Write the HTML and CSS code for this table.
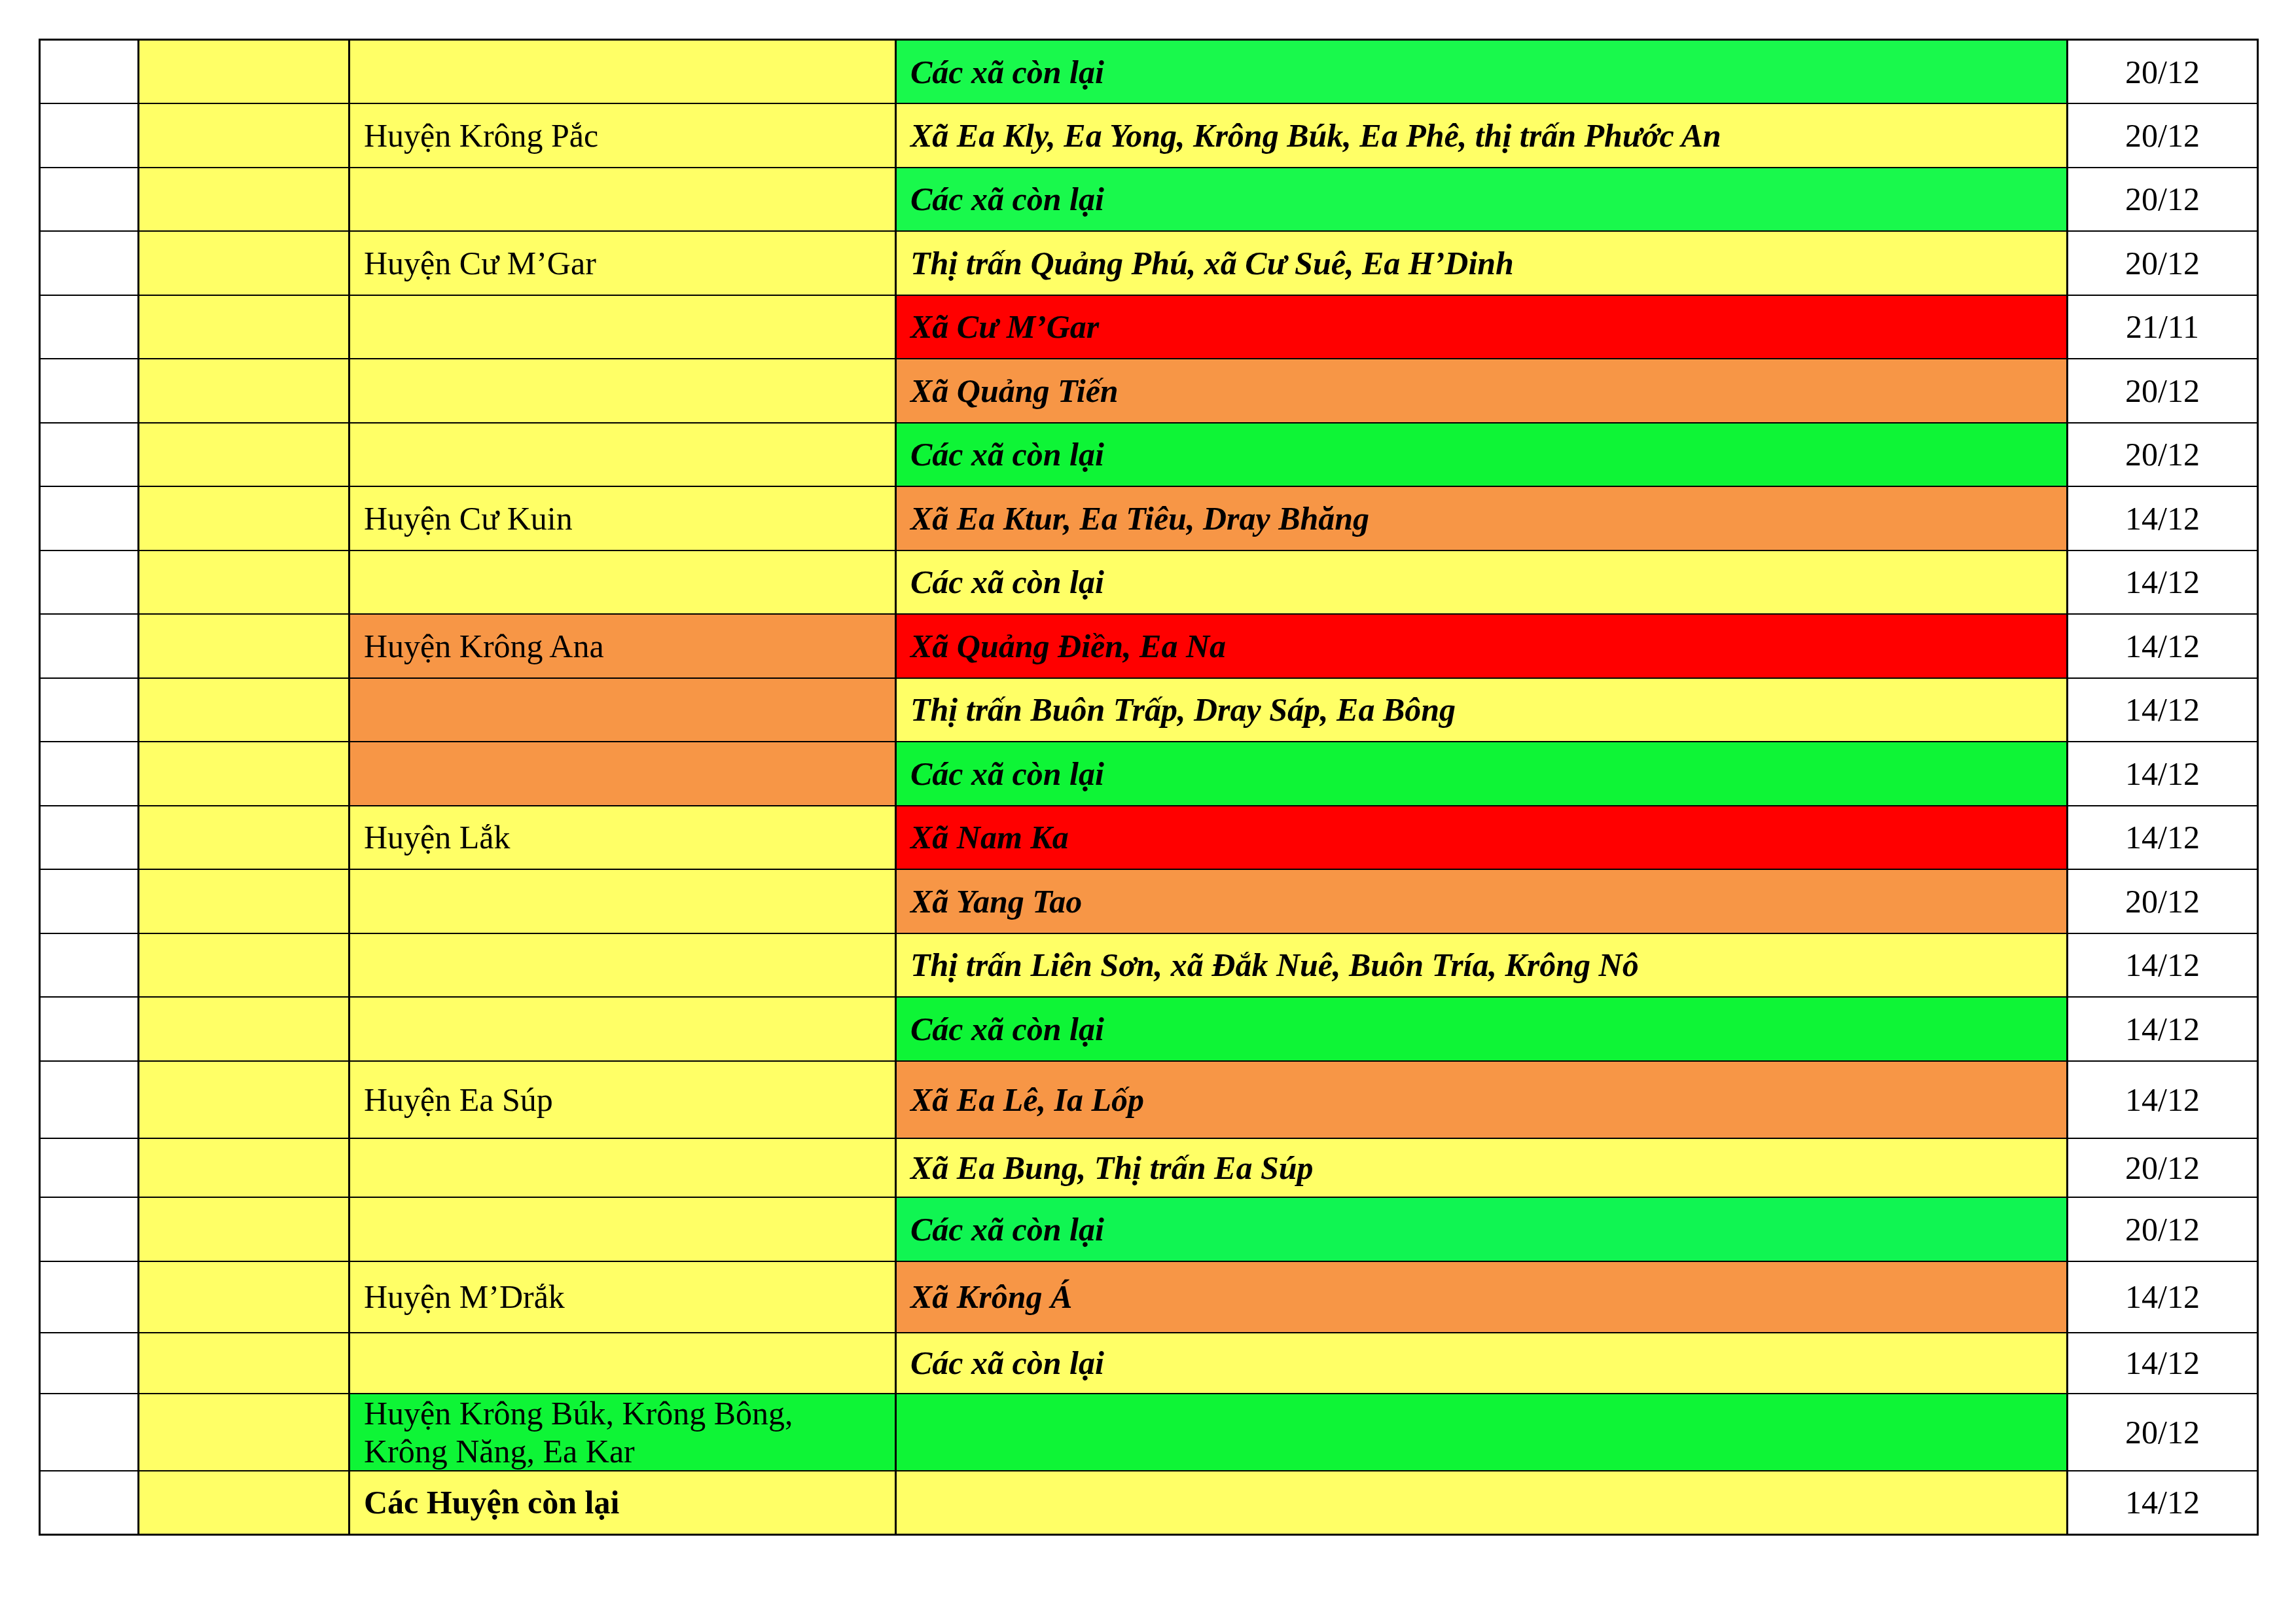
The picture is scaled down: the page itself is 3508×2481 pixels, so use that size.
FILE: index.html
```html
<!DOCTYPE html>
<html lang="vi">
<head>
<meta charset="utf-8">
<title>Lịch</title>
<link rel="stylesheet" href="styles.css">
</head>
<body>
<table class="sheet">
  <colgroup>
    <col class="c-no">
    <col class="c-prov">
    <col class="c-dist">
    <col class="c-comm">
    <col class="c-date">
  </colgroup>
  <tbody>
    <tr class="h-std"><td></td><td class="y"></td><td class="y"></td><td class="g1 comm">Các xã còn lại</td><td class="date">20/12</td></tr>
    <tr class="h-std"><td></td><td class="y"></td><td class="y dist">Huyện Krông Pắc</td><td class="y comm">Xã Ea Kly, Ea Yong, Krông Búk, Ea Phê, thị trấn Phước An</td><td class="date">20/12</td></tr>
    <tr class="h-std"><td></td><td class="y"></td><td class="y"></td><td class="g1 comm">Các xã còn lại</td><td class="date">20/12</td></tr>
    <tr class="h-std"><td></td><td class="y"></td><td class="y dist">Huyện Cư M’Gar</td><td class="y comm">Thị trấn Quảng Phú, xã Cư Suê, Ea H’Dinh</td><td class="date">20/12</td></tr>
    <tr class="h-std"><td></td><td class="y"></td><td class="y"></td><td class="r comm">Xã Cư M’Gar</td><td class="date">21/11</td></tr>
    <tr class="h-std"><td></td><td class="y"></td><td class="y"></td><td class="o comm">Xã Quảng Tiến</td><td class="date">20/12</td></tr>
    <tr class="h-std"><td></td><td class="y"></td><td class="y"></td><td class="g2 comm">Các xã còn lại</td><td class="date">20/12</td></tr>
    <tr class="h-std"><td></td><td class="y"></td><td class="y dist">Huyện Cư Kuin</td><td class="o comm">Xã Ea Ktur, Ea Tiêu, Dray Bhăng</td><td class="date">14/12</td></tr>
    <tr class="h-std"><td></td><td class="y"></td><td class="y"></td><td class="y comm">Các xã còn lại</td><td class="date">14/12</td></tr>
    <tr class="h-std"><td></td><td class="y"></td><td class="o dist">Huyện Krông Ana</td><td class="r comm">Xã Quảng Điền, Ea Na</td><td class="date">14/12</td></tr>
    <tr class="h-std"><td></td><td class="y"></td><td class="o"></td><td class="y comm">Thị trấn Buôn Trấp, Dray Sáp, Ea Bông</td><td class="date">14/12</td></tr>
    <tr class="h-std"><td></td><td class="y"></td><td class="o"></td><td class="g2 comm">Các xã còn lại</td><td class="date">14/12</td></tr>
    <tr class="h-std"><td></td><td class="y"></td><td class="y dist">Huyện Lắk</td><td class="r comm">Xã Nam Ka</td><td class="date">14/12</td></tr>
    <tr class="h-std"><td></td><td class="y"></td><td class="y"></td><td class="o comm">Xã Yang Tao</td><td class="date">20/12</td></tr>
    <tr class="h-std"><td></td><td class="y"></td><td class="y"></td><td class="y comm">Thị trấn Liên Sơn, xã Đắk Nuê, Buôn Tría, Krông Nô</td><td class="date">14/12</td></tr>
    <tr class="h-std"><td></td><td class="y"></td><td class="y"></td><td class="g2 comm">Các xã còn lại</td><td class="date">14/12</td></tr>
    <tr class="h-118"><td></td><td class="y"></td><td class="y dist">Huyện Ea Súp</td><td class="o comm">Xã Ea Lê, Ia Lốp</td><td class="date">14/12</td></tr>
    <tr class="h-90"><td></td><td class="y"></td><td class="y"></td><td class="y comm">Xã Ea Bung, Thị trấn Ea Súp</td><td class="date">20/12</td></tr>
    <tr class="h-98"><td></td><td class="y"></td><td class="y"></td><td class="g3 comm">Các xã còn lại</td><td class="date">20/12</td></tr>
    <tr class="h-109"><td></td><td class="y"></td><td class="y dist">Huyện M’Drắk</td><td class="o comm">Xã Krông Á</td><td class="date">14/12</td></tr>
    <tr class="h-93"><td></td><td class="y"></td><td class="y"></td><td class="y comm">Các xã còn lại</td><td class="date">14/12</td></tr>
    <tr class="h-118"><td></td><td class="y"></td><td class="g2 dist">Huyện Krông Búk, Krông Bông,<br>Krông Năng, Ea Kar</td><td class="g2"></td><td class="date">20/12</td></tr>
    <tr class="h-98"><td></td><td class="y"></td><td class="y dist bold">Các Huyện còn lại</td><td class="y"></td><td class="date">14/12</td></tr>
  </tbody>
</table>
</body>
</html>
```
FILE: styles.css
```css
html, body {
  margin: 0;
  padding: 0;
  background: #ffffff;
}

body {
  font-family: "Liberation Serif", "Times New Roman", serif;
  font-size: 50px;
  color: #000000;
}

.sheet {
  margin: 59px 0 0 59px;
  border-collapse: collapse;
  table-layout: fixed;
  width: 3389px;
  border: 3px solid #000;
}

.c-no { width: 151px; }
.c-prov { width: 322px; }
.c-dist { width: 835px; }
.c-comm { width: 1790px; }
.c-date { width: 291px; }

.sheet td {
  border-style: solid;
  border-color: #000;
  border-width: 2px 3px;
  padding: 0;
  vertical-align: middle;
  white-space: nowrap;
  line-height: normal;
  background: #ffffff;
}

.h-std { height: 97.5px; }
.h-118 { height: 118px; }
.h-90 { height: 90px; }
.h-98 { height: 98px; }
.h-109 { height: 109px; }
.h-93 { height: 93px; }

.sheet td.y { background: #ffff66; }
.sheet td.o { background: #f79646; }
.sheet td.r { background: #ff0000; }
.sheet td.g1 { background: #19f94c; }
.sheet td.g2 { background: #0ef536; }
.sheet td.g3 { background: #10f552; }

.sheet td.dist {
  padding-left: 21px;
}

.sheet td.comm {
  padding-left: 21px;
  font-weight: bold;
  font-style: italic;
}

.sheet td.bold {
  font-weight: bold;
}

.sheet td.date {
  text-align: center;
}
```
